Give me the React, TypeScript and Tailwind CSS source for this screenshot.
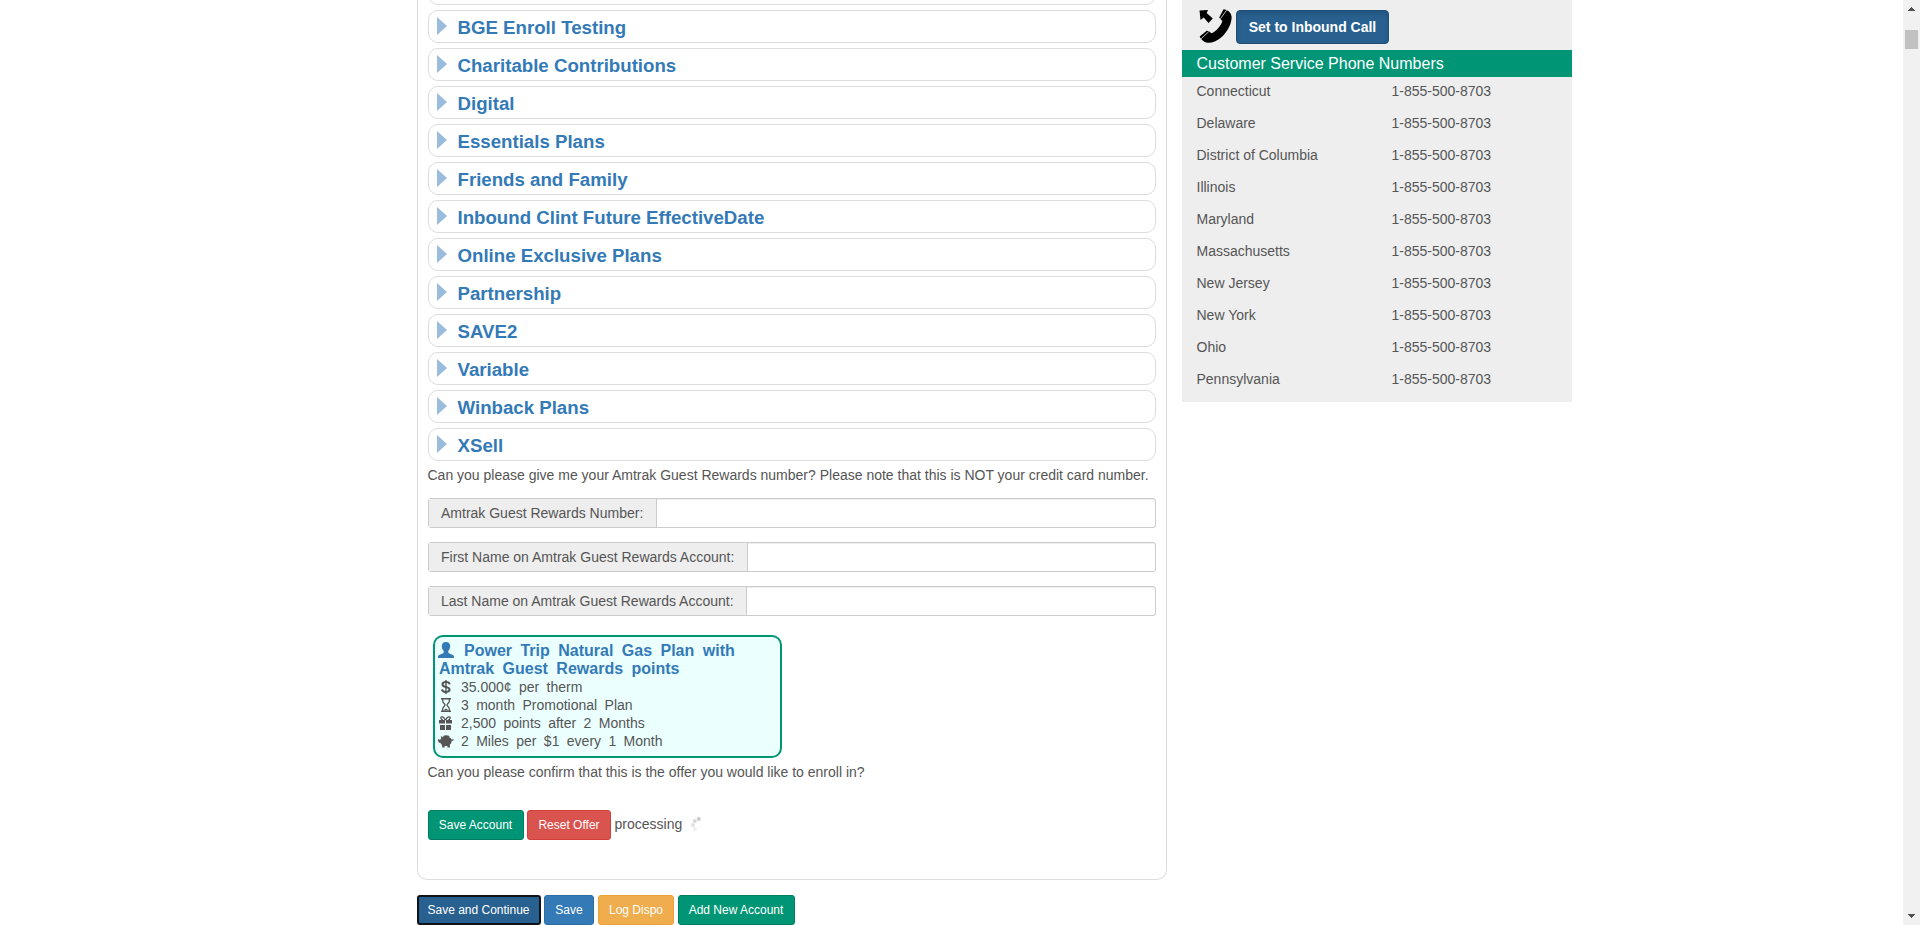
import React from "react";

const categories = [
  "BGE Enroll Testing",
  "Charitable Contributions",
  "Digital",
  "Essentials Plans",
  "Friends and Family",
  "Inbound Clint Future EffectiveDate",
  "Online Exclusive Plans",
  "Partnership",
  "SAVE2",
  "Variable",
  "Winback Plans",
  "XSell",
];

const states = [
  "Connecticut",
  "Delaware",
  "District of Columbia",
  "Illinois",
  "Maryland",
  "Massachusetts",
  "New Jersey",
  "New York",
  "Ohio",
  "Pennsylvania",
];

const fields = [
  { label: "Amtrak Guest Rewards Number:", width: "w-[228px]" },
  { label: "First Name on Amtrak Guest Rewards Account:", width: "w-[319px]" },
  { label: "Last Name on Amtrak Guest Rewards Account:", width: "w-[318px]" },
];

function Category({ name }: { name: string }) {
  return (
    <div className="flex h-[33px] shrink-0 rounded-[10px] border border-[#ddd] pl-2">
      <svg className="mt-1.5 h-[18px] w-[10px] shrink-0" viewBox="0 0 10 18">
        <path d="M0 0L10 9L0 18Z" fill="#99bbdc" />
      </svg>
      <span className="ml-[10.5px] mt-1.5 text-[18.67px] leading-[22px] font-bold text-[#337ab7]">{name}</span>
    </div>
  );
}

function UserIcon() {
  return (
    <svg className="h-4 w-4" viewBox="0 0 16 16" fill="#337ab7">
      <path d="M8 0C10.5 0 12.2 1.6 12.2 4.1C12.2 6.3 11.4 8 10.3 9.1C10 10.3 10.3 11 11.4 11.4L14.4 12.7C15.6 13.2 16 13.8 16 14.7V16H0V14.7C0 13.8.4 13.2 1.6 12.7L4.6 11.4C5.7 11 6 10.3 5.7 9.1C4.6 8 3.8 6.3 3.8 4.1C3.8 1.6 5.5 0 8 0Z" />
    </svg>
  );
}

function DollarIcon() {
  return (
    <svg className="h-[14px] w-[10px]" viewBox="0 0 10 14" fill="none" stroke="#555" strokeWidth="2">
      <path d="M8.7 4.4C8.4 2.8 7 2.1 5 2.1S1.5 3 1.5 4.4C1.5 7.8 8.6 6.2 8.6 9.6C8.6 11.1 7.2 11.9 5 11.9S1.2 11.2 1 9.4" />
      <path d="M5 0V14" strokeWidth="1.4" />
    </svg>
  );
}

function HourglassIcon() {
  return (
    <svg className="h-[14px] w-[10px]" viewBox="0 0 10 14" fill="none" stroke="#555">
      <path d="M0 .7H10M0 13.3H10" strokeWidth="1.4" />
      <path d="M1.7 1V3.2C1.7 5 4 5.8 4 7S1.7 9 1.7 10.8V13M8.3 1V3.2C8.3 5 6 5.8 6 7S8.3 9 8.3 10.8V13" strokeWidth="1.3" />
      <path d="M3 12.5C3.3 11.3 4.3 10.7 5 10.7S6.7 11.3 7 12.5Z" fill="#555" stroke="none" />
    </svg>
  );
}

function GiftIcon() {
  return (
    <svg className="h-[14px] w-[13px]" viewBox="0 0 13 14">
      <path d="M0 4H6V7.5H0ZM7 4H13V7.5H7ZM1 9H6V14H1ZM7 9H12V14H7Z" fill="#555" />
      <path d="M6.2 4.2C5.4 1.8 4 .4 2.6.9C1.2 1.5 2.1 3.6 3.8 4.2M6.8 4.2C7.6 1.8 9 .4 10.4.9C11.8 1.5 10.9 3.6 9.2 4.2" fill="none" stroke="#555" strokeWidth="1.3" />
    </svg>
  );
}

function PiggyIcon() {
  return (
    <svg className="h-[13px] w-[16px]" viewBox="0 0 17 13" preserveAspectRatio="none" fill="#555">
      <path d="M3 1L5.2 2.2C6.2 1.8 7.5 1.7 9 1.7C11.8 1.7 13.8 2.7 14.4 4.4C15 4.8 15.4 4.5 15.5 4.2L17 4.5C16.7 5.6 15.8 6 14.6 5.8C14.6 7.5 13.8 8.8 12.7 9.6V12.5H10V11H7.1V12.5H4.4V10.2C3.4 9.5 2.8 8.7 2.5 7.7H1V4.8H2.4C2.7 4.2 3 3.7 3.4 3.3Z" />
      <path d="M0 4L2 5L1.5 7.3L0 6.5Z" />
      <path d="M5.3 1C7.3-.1 10.2-.1 12.2 1.1L11.8 2.2H6Z" />
    </svg>
  );
}

function PhoneIcon() {
  return (
    <svg className="h-[35px] w-[33px]" viewBox="0 0 33 35">
      <path d="M.5 1.5L9 1L7.7 4L13.8 9.5L9.5 14L4.7 8.5L1.5 11Z" />
      <path d="M24.5 .2C28.5 .5 32.5 3.5 32.6 8C32.8 14.5 28.5 22.5 23 27.7C18.5 32 12.5 34.3 8.2 33.8C4.8 33.3 2 30.8 .7 27.6L7.7 21.7C9.5 21.6 11 23 12.6 24.2C17 22.5 22 17 23.3 12L20.2 8.5Z" />
      <path d="M21.5 9.6L27.6 1.2M2 29.8L9.8 22.6" stroke="#eee" strokeWidth=".8" />
    </svg>
  );
}

function OfferLine({ icon, children }: { icon: React.ReactNode; children: React.ReactNode }) {
  return (
    <div className="flex h-[18px] items-center">
      <span className="-ml-[2px] flex w-[17px] shrink-0 justify-center">{icon}</span>
      <span className="ml-[7px] text-sm leading-[18px] whitespace-nowrap [word-spacing:3.5px]">{children}</span>
    </div>
  );
}

function Button({ className, children }: { className: string; children: React.ReactNode }) {
  return (
    <button className={"h-[30px] shrink-0 rounded-[3px] border text-center text-xs leading-[18px] whitespace-nowrap text-white " + className}>
      {children}
    </button>
  );
}

export default function App() {
  return (
    <div className="flex h-[925px] w-[1920px] overflow-hidden bg-white font-['Liberation_Sans',Arial,sans-serif] text-sm leading-5 text-[#555]">
      <main className="ml-[417px] flex w-[750px] shrink-0 flex-col">
        <section className="flex h-[880px] shrink-0 flex-col rounded-b-[10px] border border-t-0 border-[#ddd] px-[10px]">
          <div className="h-[5px] shrink-0 overflow-hidden">
            <div className="-mt-7 h-[33px] rounded-[10px] border border-[#ddd]" />
          </div>
          <div className="mt-[5px] flex flex-col gap-[5px]">
            {categories.map((c) => (
              <Category key={c} name={c} />
            ))}
          </div>
          <p className="mt-1 -ml-[0.5px] whitespace-nowrap">
            Can you please give me your Amtrak Guest Rewards number? Please note that this is NOT your credit card number.
          </p>
          <div className="mt-[13px] flex flex-col gap-[14px]">
            {fields.map((f) => (
              <div key={f.label} className="flex h-[30px] rounded-[3px] border border-[#ccc] shadow-[inset_0_1px_1px_rgba(0,0,0,0.075)]">
                <label className={"h-7 shrink-0 border-r border-[#ccc] bg-[#eee] pl-3 leading-7 whitespace-nowrap " + f.width}>
                  {f.label}
                </label>
                <input className="min-w-0 flex-1 bg-transparent px-2 outline-none" />
              </div>
            ))}
          </div>
          <div className="mt-[19px] ml-[5px] h-[123px] w-[349px] rounded-[10px] border-2 border-[#009575] bg-[#ebffff] pt-[5px] pl-1 [word-spacing:4px]">
            <div className="-ml-px flex h-[18px] text-base leading-[18px] font-bold whitespace-nowrap text-[#337ab7]">
              <UserIcon />
              <span className="ml-[10px]">Power Trip Natural Gas Plan with</span>
            </div>
            <div className="h-[18px] text-base leading-[18px] font-bold whitespace-nowrap text-[#337ab7]">
              Amtrak Guest Rewards points
            </div>
            <OfferLine icon={<DollarIcon />}>35.000¢ per therm</OfferLine>
            <OfferLine icon={<HourglassIcon />}>3 month Promotional Plan</OfferLine>
            <OfferLine icon={<GiftIcon />}>2,500 points after 2 Months</OfferLine>
            <OfferLine icon={<PiggyIcon />}>2 Miles per $1 every 1 Month</OfferLine>
          </div>
          <p className="mt-1 -ml-[0.5px]">Can you please confirm that this is the offer you would like to enroll in?</p>
          <div className="mt-7 flex">
            <Button className="w-24 border-[#007c61] bg-[#009575] pr-px">Save Account</Button>
            <Button className="ml-[3px] w-[84px] border-[#d43f3a] bg-[#d9534f]">Reset Offer</Button>
            <span className="mt-1 ml-[3.5px]">processing</span>
            <svg className="mt-[6px] ml-2 h-4 w-4" viewBox="0 0 16 16">
              <circle cx="8.8" cy="3" r="2" fill="#ccc" />
              <circle cx="4.8" cy="5" r="2" fill="#d8d8d8" />
              <circle cx="3" cy="9" r="2" fill="#e2e2e2" />
              <circle cx="4.9" cy="13" r="2" fill="#eee" />
            </svg>
          </div>
        </section>
        <div className="mt-[15px] flex">
          <Button className="w-[124px] border-2 border-[#101418] bg-[#286090] pr-px">Save and Continue</Button>
          <Button className="ml-[3px] w-[50px] border-[#2e6da4] bg-[#337ab7]">Save</Button>
          <Button className="ml-1 w-[76px] border-[#eea236] bg-[#f0ad4e]">Log Dispo</Button>
          <Button className="ml-1 w-[117px] border-[#007c61] bg-[#009575] pr-px">Add New Account</Button>
        </div>
      </main>
      <aside className="ml-[15px] h-[402px] w-[390px] shrink-0 bg-[#eee]">
        <div className="flex h-[50px] pl-[17px]">
          <div className="mt-[9px] w-[37px] shrink-0">
            <PhoneIcon />
          </div>
          <button className="mt-[10px] h-[34px] w-[153px] rounded-[4px] border border-[#204d74] bg-[#286090] text-sm font-bold text-white shadow-[inset_0_3px_5px_rgba(0,0,0,0.125)]">
            Set to Inbound Call
          </button>
        </div>
        <h2 className="h-[27px] bg-[#009575] pl-[14.5px] text-base leading-[27px] text-white">Customer Service Phone Numbers</h2>
        <div className="flex flex-col gap-3 pt-1">
          {states.map((s) => (
            <div key={s} className="flex h-5 pl-[14.5px]">
              <span className="w-[195px]">{s}</span>
              <span>1-855-500-8703</span>
            </div>
          ))}
        </div>
      </aside>
      <div className="ml-auto flex w-[17px] shrink-0 flex-col items-center bg-[#f1f1f1]">
        <svg className="mt-[7px] h-1 w-[7px]" viewBox="0 0 7 4" shapeRendering="crispEdges">
          <path d="M0 4V3H1V2H2V1H3V0H4V1H5V2H6V3H7V4Z" fill="#505050" />
        </svg>
        <div className="mt-[19px] h-[19px] w-[13px] bg-[#c1c1c1]" />
        <svg className="mt-auto mb-[7px] h-1 w-[7px]" viewBox="0 0 7 4" shapeRendering="crispEdges">
          <path d="M0 0V1H1V2H2V3H3V4H4V3H5V2H6V1H7V0Z" fill="#505050" />
        </svg>
      </div>
    </div>
  );
}
